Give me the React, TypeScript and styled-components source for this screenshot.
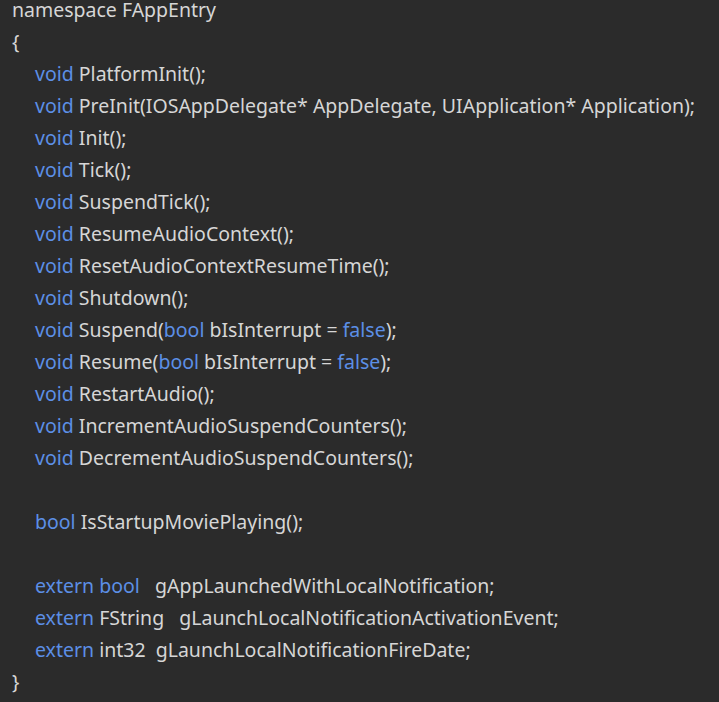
import styled, { createGlobalStyle } from 'styled-components'

const Global = createGlobalStyle`
  html, body { margin: 0; background: #2b2b2b; }
`

const Editor = styled.div`
  width: 719px;
  height: 702px;
  overflow: hidden;
  background: #2b2b2b;
  box-sizing: border-box;
  padding: 0 0 0 12px;
`

const Code = styled.div`
  margin-top: -6px;
  font-family: 'Noto Sans', sans-serif;
  font-size: 19.5px;
  line-height: 32px;
  color: #d6d6d6;
  white-space: pre;
`

const Line = styled.div<{ $indent?: boolean }>`
  height: 32px;
  padding-left: ${({ $indent }) => ($indent ? '23px' : '0')};
`

const Kw = styled.span`
  color: #5c8fe6;
`

type Part = string | { k: string }
const lines: { indent: boolean; parts: Part[] }[] = [
  { indent: false, parts: ['namespace FAppEntry'] },
  { indent: false, parts: ['{'] },
  { indent: true, parts: [{ k: 'void' }, ' PlatformInit();'] },
  { indent: true, parts: [{ k: 'void' }, ' PreInit(IOSAppDelegate* AppDelegate, UIApplication* Application);'] },
  { indent: true, parts: [{ k: 'void' }, ' Init();'] },
  { indent: true, parts: [{ k: 'void' }, ' Tick();'] },
  { indent: true, parts: [{ k: 'void' }, ' SuspendTick();'] },
  { indent: true, parts: [{ k: 'void' }, ' ResumeAudioContext();'] },
  { indent: true, parts: [{ k: 'void' }, ' ResetAudioContextResumeTime();'] },
  { indent: true, parts: [{ k: 'void' }, ' Shutdown();'] },
  { indent: true, parts: [{ k: 'void' }, ' Suspend(', { k: 'bool' }, ' bIsInterrupt = ', { k: 'false' }, ');'] },
  { indent: true, parts: [{ k: 'void' }, ' Resume(', { k: 'bool' }, ' bIsInterrupt = ', { k: 'false' }, ');'] },
  { indent: true, parts: [{ k: 'void' }, ' RestartAudio();'] },
  { indent: true, parts: [{ k: 'void' }, ' IncrementAudioSuspendCounters();'] },
  { indent: true, parts: [{ k: 'void' }, ' DecrementAudioSuspendCounters();'] },
  { indent: true, parts: [''] },
  { indent: true, parts: [{ k: 'bool' }, ' IsStartupMoviePlaying();'] },
  { indent: true, parts: [''] },
  { indent: true, parts: [{ k: 'extern' }, ' ', { k: 'bool' }, '   gAppLaunchedWithLocalNotification;'] },
  { indent: true, parts: [{ k: 'extern' }, ' FString   gLaunchLocalNotificationActivationEvent;'] },
  { indent: true, parts: [{ k: 'extern' }, ' int32  gLaunchLocalNotificationFireDate;'] },
  { indent: false, parts: ['}'] },
]

export default function App() {
  return (
    <>
      <Global />
      <Editor>
        <Code>
          {lines.map((l, i) => (
            <Line key={i} $indent={l.indent}>
              {l.parts.map((p, j) => (typeof p === 'string' ? p : <Kw key={j}>{p.k}</Kw>))}
            </Line>
          ))}
        </Code>
      </Editor>
    </>
  )
}
